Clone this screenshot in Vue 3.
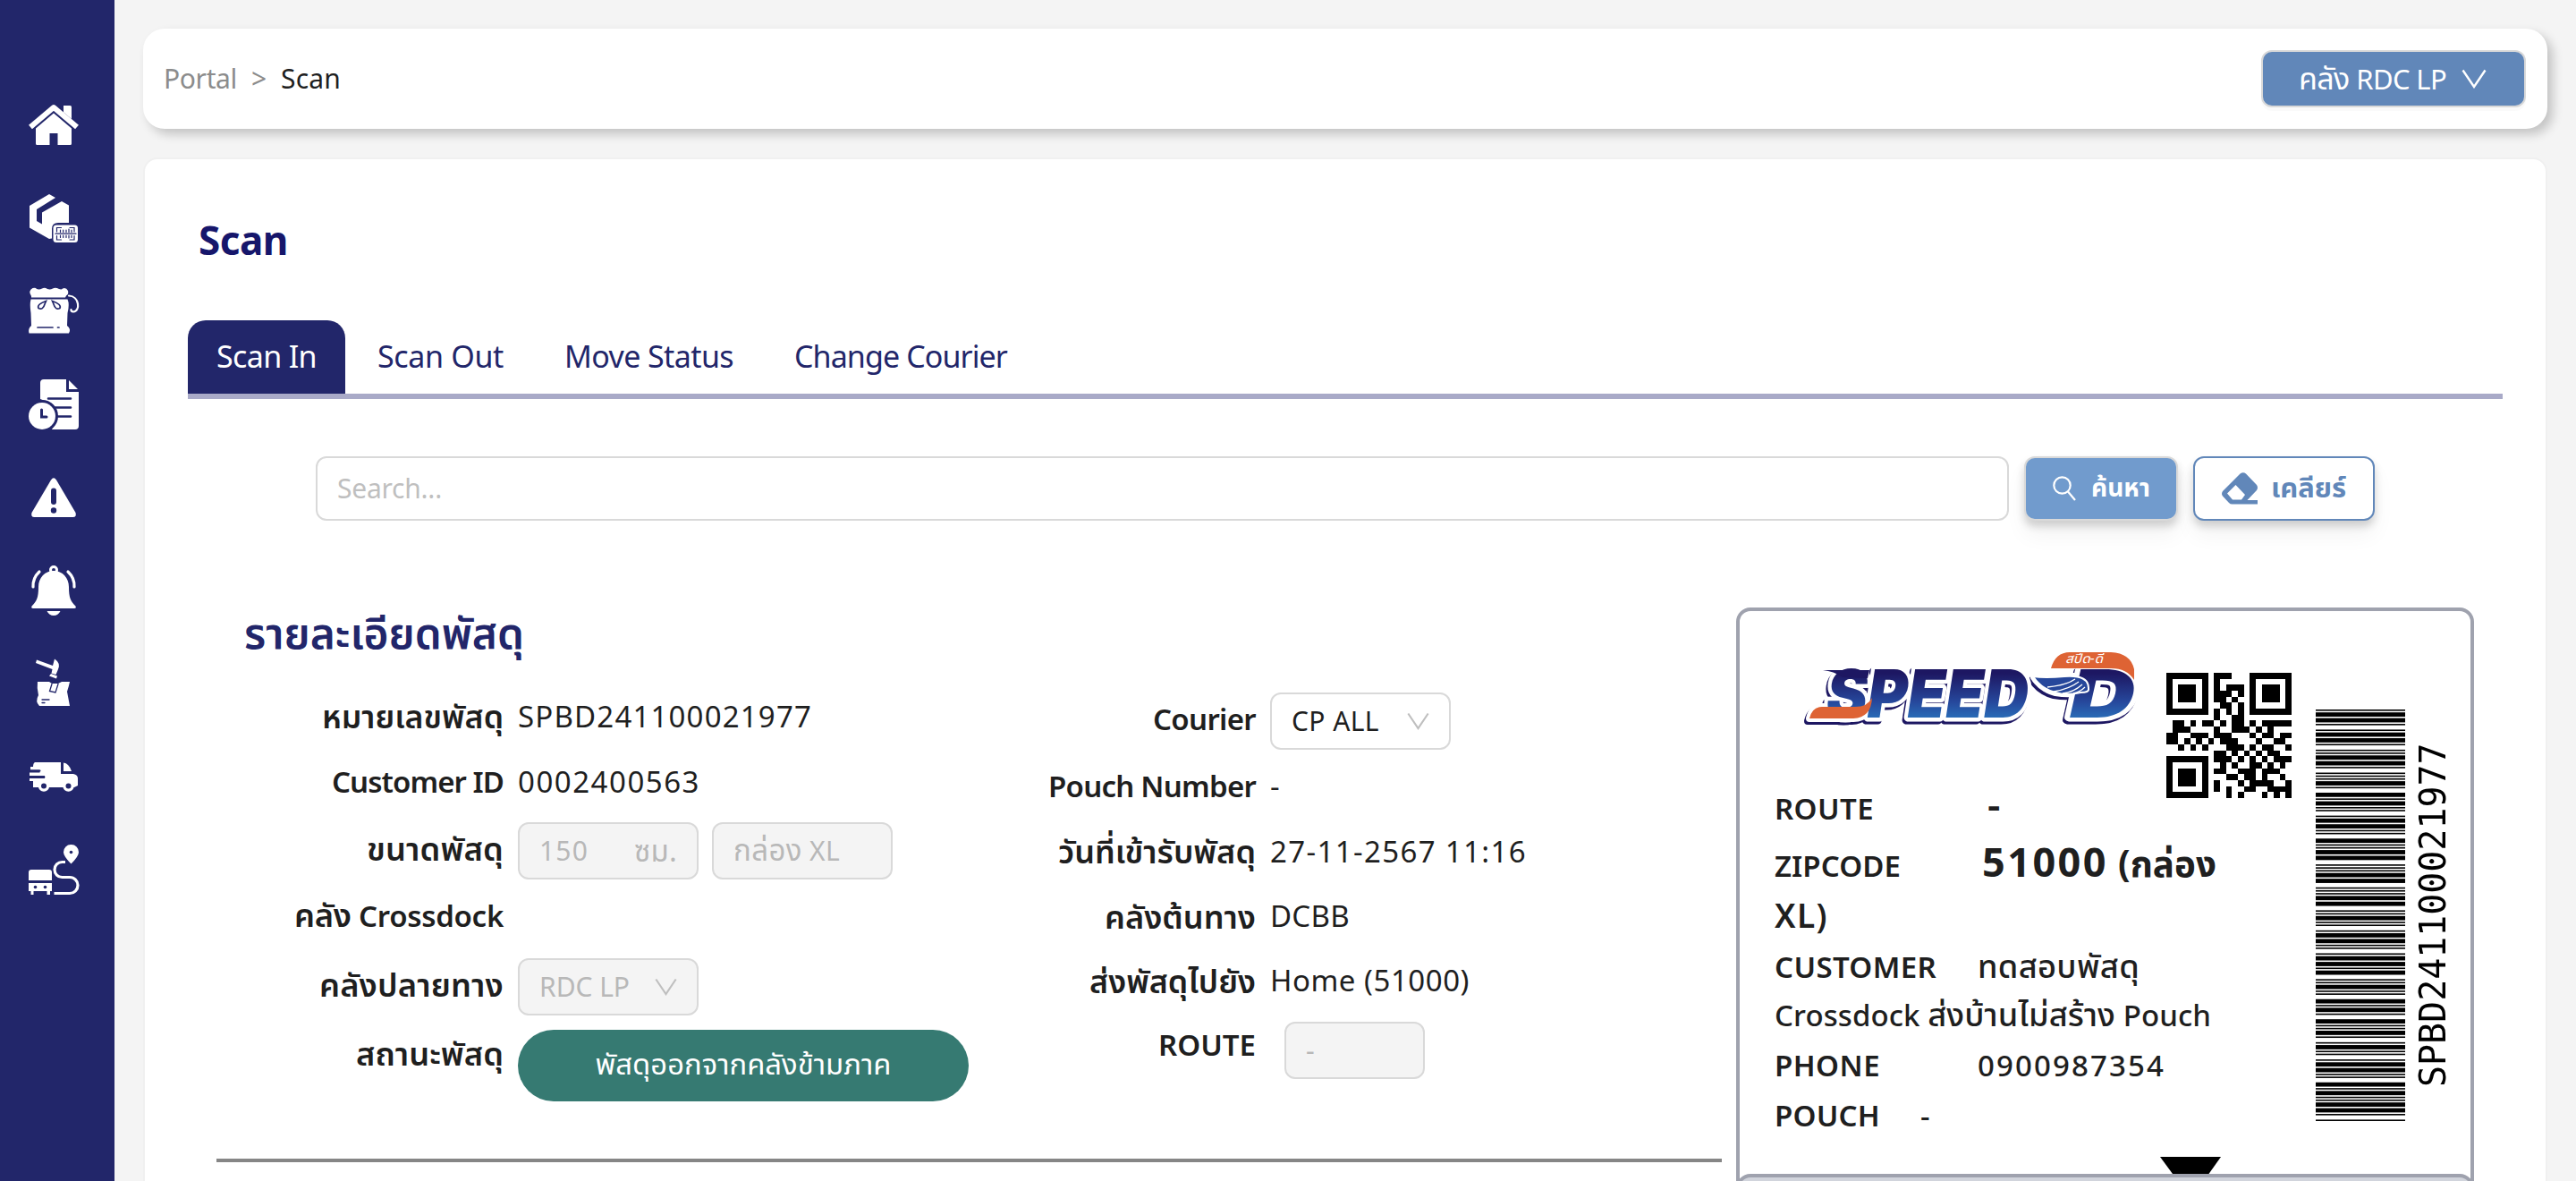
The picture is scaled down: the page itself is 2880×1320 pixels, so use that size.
<script setup>
// Makes the text of an element take the given width: Thai-only text is first
// enlarged a little, and the rest is spread over the letters.
const fitText = (el, { value }) => {
  if (!value) return
  const width = () => el.getBoundingClientRect().width
  el.style.letterSpacing = '0px'
  if (!/[A-Za-z0-9]/.test(el.textContent)) {
    const size = parseFloat(getComputedStyle(el).fontSize)
    const scale = Math.min(Math.max(value / width(), 0.94), 1.1)
    el.style.fontSize = `${(size * scale).toFixed(2)}px`
  }
  const base = width()
  el.style.letterSpacing = '1px'
  const step = width() - base
  el.style.letterSpacing = step ? `${((value - base) / step).toFixed(3)}px` : '0px'
}
const vFit = { mounted: fitText }

const parcelNo = 'SPBD241100021977'

const tabs = [
  { name: 'Scan In', w: 112, active: true },
  { name: 'Scan Out', w: 141 },
  { name: 'Move Status', w: 189 },
  { name: 'Change Courier', w: 238 },
]

/* ---------- Code 39 ---------- */
const CODE39 = {
  0: 'nnnwwnwnn', 1: 'wnnwnnnnw', 2: 'nnwwnnnnw', 4: 'nnnwwnnnw', 7: 'nnnwnnwnw',
  9: 'nnwwnnwnn', B: 'nnwnnwnnw', D: 'nnnnwwnnw', P: 'nnwnwnnwn', S: 'nnwnnnwwn', '*': 'nwnnwnwnn',
}
const bars = []
let barPos = 0
for (const ch of `*${parcelNo}*`) {
  ;[...CODE39[ch]].forEach((k, i) => {
    const size = k === 'w' ? 3 : 1
    if (i % 2 === 0) bars.push({ pos: barPos, size })
    barPos += size
  })
  barPos += 1
}
const barTotal = barPos - 1

/* ---------- QR, version 1, level Q, mask 0 ---------- */
function qrPath(text) {
  const N = 21
  const chars = '0123456789ABCDEFGHIJKLMNOPQRSTUVWXYZ $%*+-./:'
  let bits = '0010' + text.length.toString(2).padStart(9, '0')
  for (let i = 0; i < text.length; i += 2) {
    bits += i + 1 < text.length
      ? (chars.indexOf(text[i]) * 45 + chars.indexOf(text[i + 1])).toString(2).padStart(11, '0')
      : chars.indexOf(text[i]).toString(2).padStart(6, '0')
  }
  bits = bits.padEnd(104, '0').slice(0, 104)
  const data = bits.match(/.{8}/g).map((b) => parseInt(b, 2))
  const exp = []
  const log = []
  let x = 1
  for (let i = 0; i < 255; i++) {
    exp[i] = x
    log[x] = i
    x <<= 1
    if (x & 256) x ^= 0x11d
  }
  const mul = (a, b) => (a && b ? exp[(log[a] + log[b]) % 255] : 0)
  let gen = [1]
  for (let i = 0; i < 13; i++) {
    const next = new Array(gen.length + 1).fill(0)
    gen.forEach((g, j) => {
      next[j] ^= g
      next[j + 1] ^= mul(g, exp[i])
    })
    gen = next
  }
  const rem = [...data, ...new Array(13).fill(0)]
  for (let i = 0; i < 13; i++) {
    const f = rem[i]
    gen.forEach((g, j) => { rem[i + j] ^= mul(g, f) })
  }
  const stream = [...data, ...rem.slice(13)].map((v) => v.toString(2).padStart(8, '0')).join('')
  const m = Array.from({ length: N }, () => new Array(N).fill(null))
  const finder = (r0, c0) => {
    for (let r = -1; r < 8; r++) {
      for (let c = -1; c < 8; c++) {
        if (m[r0 + r] === undefined || m[r0 + r][c0 + c] === undefined) continue
        const d = Math.max(Math.abs(r - 3), Math.abs(c - 3))
        m[r0 + r][c0 + c] = d === 3 || d < 2 ? 1 : 0
      }
    }
  }
  finder(0, 0)
  finder(0, 14)
  finder(14, 0)
  for (let i = 8; i < 13; i++) m[6][i] = m[i][6] = i % 2 === 0 ? 1 : 0
  const fmt = [...'011010101011111'].map(Number)
  const first = [[8, 0], [8, 1], [8, 2], [8, 3], [8, 4], [8, 5], [8, 7], [8, 8], [7, 8], [5, 8], [4, 8], [3, 8], [2, 8], [1, 8], [0, 8]]
  fmt.forEach((b, i) => {
    m[first[i][0]][first[i][1]] = b
    if (i < 7) m[20 - i][8] = b
    else m[8][13 + i - 7] = b
  })
  m[13][8] = 1
  let k = 0
  let up = true
  for (let c = 20; c > 0; c -= 2) {
    if (c === 6) c = 5
    for (let i = 0; i < N; i++) {
      const r = up ? N - 1 - i : i
      for (const cc of [c, c - 1]) {
        if (m[r][cc] !== null) continue
        const bit = Number(stream[k++] || 0)
        m[r][cc] = (r + cc) % 2 === 0 ? bit ^ 1 : bit
      }
    }
    up = !up
  }
  let d = ''
  m.forEach((row, r) => row.forEach((v, c) => { if (v) d += `M${c} ${r}h1v1h-1z` }))
  return d
}
const qr = qrPath(parcelNo)
</script>

<template>
  <div class="page">
    <aside class="sidebar">
      <svg class="nav" viewBox="0 0 56 56">
        <path d="M39 6h7.500a1.500 1.500 0 0 1 1.500 1.500V21l-9-7.500z" />
        <path d="M2 30 28 8 54 30" fill="none" stroke="#fff" stroke-width="6" stroke-linejoin="round" />
        <path d="M28 14.500 48 31.500V48.500a1.500 1.500 0 0 1-1.500 1.500H32.500V37h-9V50H9.500A1.500 1.500 0 0 1 8 48.500V31.500z" />
      </svg>
      <svg class="nav" viewBox="0 0 56 56">
        <path d="M23 1 30 5 9 18V31L15 34.500V21.500L37 9 45 13.500V33H33q-7 0-7 7V50.500L23 51 1 38.500V14z" />
        <rect x="27.500" y="35.500" width="27.500" height="19.500" rx="3.500" />
        <path class="cut" d="M31.500 43v-4.500h5M46 38.500h5V43M31.500 47.500V52h5M46 52h5v-4.500M30 45.200h23M35.500 41v2.500M38.700 41v2.500M42 41v2.500M45 40v3.500M48 41v2.500M35.500 47v2.500M38.700 47v2.500M42 47v2.500M45 47v3M48 47v2.500" stroke-width="1.200" />
      </svg>
      <svg class="nav" viewBox="0 0 56 56">
        <path d="M3 11q-4-6 1.500-9Q8 1 9 3 12 4 15 2.500 18 1 21 3 24 4 27 2.500 30 1 34 3 37 4 38 2.500 42 1 44 5 45 9 42 10.500L41 12.500H3z" />
        <path d="M2.500 14.500H43.500Q46 20 43.500 30L43 44q5 4 2 8.500H0.500Q-1 47 3 44L2.500 30Q1 20 2.500 14.500z" />
        <path d="M45 10.500C57 11 58 28 50 28.500Q47 28 47.500 26" fill="none" stroke="#fff" stroke-width="2.200" stroke-linecap="round" />
        <path class="cut" d="M19.500 16.500Q9 20 11 24.500 16 27 18 20zM26.500 16.500Q37 20 35 24.500 30 27 28 20zM10 46h17M32.500 46h1.500" stroke-width="1.700" />
      </svg>
      <svg class="nav" viewBox="0 0 56 56">
        <path d="M17 0H42V14H56V52a4 4 0 0 1-4 4H26L32 41 26 27 13 22V4a4 4 0 0 1 4-4z" />
        <path d="M45 1 55 11H45z" />
        <path class="cut" d="M22 21.500H47M30 31.500H47M33 41.500H47" stroke-width="2.600" />
        <circle cx="15" cy="41" r="16.500" fill="none" stroke="#22266a" stroke-width="3" />
        <circle cx="15" cy="41" r="15" />
        <path class="cut" d="M14.500 34v8H20" stroke-width="3" />
      </svg>
      <svg class="nav" viewBox="0 0 56 56">
        <path d="M25 8.500Q28 4 31 8.500L52.500 45Q54 50 49.500 50H6.500Q2 50 3.500 45z" />
        <path class="cut" d="M28 20.500V33" stroke-width="6" />
        <circle cx="28" cy="42.500" r="3.200" fill="#22266a" />
      </svg>
      <svg class="nav" viewBox="0 0 56 56">
        <path d="M28 6C38 6 45 14 45 24 45 36 47 40 52.500 45.500Q53.500 48 51 48H5Q2.500 48 3.500 45.500C9 40 11 36 11 24 11 14 18 6 28 6zM20.500 51H35.500Q33 56 28 56T20.500 51z" />
        <circle cx="28" cy="5" r="3.500" fill="none" stroke="#fff" stroke-width="3" />
        <path d="M12 7Q4.500 14 5 24M44 7Q51.500 14 51 24" fill="none" stroke="#fff" stroke-width="3.200" stroke-linecap="round" />
      </svg>
      <svg class="nav" viewBox="0 0 56 56">
        <path d="M9 1.500 27 8 29 .5Q36 5 33 12L30.500 18 25.500 16.500 26.500 12 8 5zM25 17 32 19.500 31 22.500 23 19.500z" />
        <path d="M10 26H23L26 28H33L37 26H46Q45 31 43 37L46 53H12Q7 48 11 41 9 33 10 26z" />
        <path class="cut" d="M26 28.500 23.500 36.500 30 38 33 28.500M15 46H23M15 49.500H18" stroke-width="1.300" />
      </svg>
      <svg class="nav" viewBox="0 0 56 56">
        <path d="M7 12H36V25H50Q55 26 55 30V38L51 40H5V33H1V30H18V27H1V23.500H12.500V20.500H2V17H5Q5 13 7 12zM39 12.500Q45 13 48 22H39z" />
        <circle cx="17" cy="38.500" r="6.200" /><circle cx="44.500" cy="38.500" r="6.200" />
        <circle cx="17" cy="38.500" r="3" fill="#22266a" /><circle cx="44.500" cy="38.500" r="3" fill="#22266a" />
        <path class="cut" d="M2 21.500H12.500M2 28.500H17.500" stroke-width="2" />
      </svg>
      <svg class="nav" viewBox="0 0 56 56">
        <path d="M47.500 0A8.200 8.200 0 0 1 56 8.500Q56 13 47.500 21.500 39 13 39 8.500A8.200 8.200 0 0 1 47.500 0zM3 28H23Q26 28 26 31V40H0V31Q0 28 3 28zM0 43H26V52H24V56H20.500V52H5.500V56H2.500V52H0z" />
        <circle cx="47.500" cy="8.500" r="1.800" fill="#22266a" />
        <circle cx="7.500" cy="47.500" r="1.800" fill="#22266a" /><circle cx="18.500" cy="47.500" r="1.800" fill="#22266a" />
        <path d="M41 19.500H37.500A8.500 8.500 0 0 0 37.500 36.500H46A9 9 0 0 1 46 54.500H28.500" fill="none" stroke="#fff" stroke-width="3.200" />
      </svg>
    </aside>

    <div class="content">
      <header class="topbar">
        <nav class="crumbs">
          <span v-fit="82" class="muted">Portal</span>
          <span class="muted sep">&gt;</span>
          <span v-fit="67">Scan</span>
        </nav>
        <button class="warehouse">
          <span v-fit="165"><i>คลัง</i> RDC LP</span>
          <svg class="chev" viewBox="0 0 28 22"><path d="M1.500 1.500 14 20 26.500 1.500" /></svg>
        </button>
      </header>

      <main class="card">
        <h1><span v-fit="100">Scan</span></h1>
        <div class="tabs">
          <div v-for="t in tabs" :key="t.name" class="tab" :class="{ active: t.active }">
            <span v-fit="t.w">{{ t.name }}</span>
          </div>
        </div>

        <div class="search-row">
          <div class="search-box"><span v-fit="117">Search...</span></div>
          <button class="btn find">
            <svg viewBox="0 0 26 28"><circle cx="10.500" cy="10.500" r="9.200" /><path d="M17 17.500 25 27" /></svg>
            <span v-fit="66">ค้นหา</span>
          </button>
          <button class="btn clear">
            <svg viewBox="0 0 40 36">
              <path fill-rule="evenodd" d="M20.500 1.500Q24 -1 27 1.500L39 14Q41 17 39 20L28.500 31H40V35.500H11.500Q9.500 35.500 8 34L1 26.500Q-1 24 1 21zM15.500 14 6 23.500 12 30.500H22L26 25z" />
            </svg>
            <span v-fit="84">เคลียร์</span>
          </button>
        </div>

        <div class="detail">
          <section class="info">
            <h2><span v-fit="313">รายละเอียดพัสดุ</span></h2>
            <div class="cols">
              <div class="col left">
                <div class="row h73"><label><span v-fit="203">หมายเลขพัสดุ</span></label><span v-fit="329">{{ parcelNo }}</span></div>
                <div class="row h73"><label><span v-fit="192">Customer ID</span></label><span v-fit="204">0002400563</span></div>
                <div class="row h76">
                  <label><span v-fit="153">ขนาดพัสดุ</span></label>
                  <div class="field off w202"><span v-fit="55">150</span><span v-fit="48">ซม.</span></div>
                  <div class="field off w202 next"><span v-fit="119"><i>กล่อง</i> XL</span></div>
                </div>
                <div class="row h76"><label><span v-fit="234"><i>คลัง</i> Crossdock</span></label></div>
                <div class="row h77">
                  <label><span v-fit="206">คลังปลายทาง</span></label>
                  <div class="field off w202"><span v-fit="101">RDC LP</span><svg class="chev small" viewBox="0 0 28 22"><path d="M1.500 1.500 14 20 26.500 1.500" /></svg></div>
                </div>
                <div class="row h76"><label><span v-fit="165">สถานะพัสดุ</span></label><div class="pill"><span v-fit="331">พัสดุออกจากคลังข้ามภาค</span></div></div>
              </div>
              <div class="col right">
                <div class="row h79">
                  <label><span v-fit="115">Courier</span></label>
                  <div class="field w202"><span v-fit="98">CP ALL</span><svg class="chev small" viewBox="0 0 28 22"><path d="M1.500 1.500 14 20 26.500 1.500" /></svg></div>
                </div>
                <div class="row h72"><label><span v-fit="232">Pouch Number</span></label><span>-</span></div>
                <div class="row h73"><label><span v-fit="221">วันที่เข้ารับพัสดุ</span></label><span v-fit="287">27-11-2567 11:16</span></div>
                <div class="row h72"><label><span v-fit="169">คลังต้นทาง</span></label><span v-fit="89">DCBB</span></div>
                <div class="row h72"><label><span v-fit="186">ส่งพัสดุไปยัง</span></label><span v-fit="223">Home (51000)</span></div>
                <div class="row h72"><label><span v-fit="109">ROUTE</span></label><div class="field off route"><span>-</span></div></div>
              </div>
            </div>
            <div class="divider"></div>
          </section>

          <section class="ticket">
            <div class="ticket-body">
              <div class="ticket-main">
                <div class="ticket-top">
                  <svg class="logo" viewBox="0 0 390 100">
                    <defs>
                      <linearGradient id="blue" x1="0" y1="0" x2="0" y2="1">
                        <stop offset="0.250" stop-color="#1d1762" />
                        <stop offset="0.600" stop-color="#26479b" />
                        <stop offset="0.850" stop-color="#2a74bd" />
                      </linearGradient>
                    </defs>
                    <g class="raised">
                      <path class="halo" d="M13 83Q16 70 27 70H64Q78 70 83 60 82 82 62 83z" />
                      <path class="halo" d="M264 37Q276 38 298 36 326 34 325 50 310 58 288 54 272 50 264 37z" />
                      <text class="word" x="32" y="82" textLength="226" lengthAdjust="spacingAndGlyphs">SPEED</text>
                      <text class="word" x="304" y="82" textLength="73" lengthAdjust="spacingAndGlyphs">D</text>
                    </g>
                    <path d="M28 29H80L78 38 50 37Q40 30 28 29z" fill="#1d1762" />
                    <path d="M13 83Q16 70 27 70H64Q78 70 83 60 82 82 62 83z" fill="#de6334" />
                    <path d="M283 27Q288 9 304 9H350Q372 10 376 28V40Q368 27 350 27z" fill="#de6334" />
                    <path d="M263 36Q276 38 298 36 326 34 325 50 326 54 316 54 300 58 288 54 272 50 263 36z" fill="#26479b" stroke="#fff" stroke-width="2" />
                    <path d="M279 48Q300 46 310 39M286 53Q304 50 314 42M296 55Q308 54 318 45M308 55Q316 53 321 48" fill="none" stroke="#fff" stroke-width="1.300" />
                    <text class="logo-th" x="299" y="21" textLength="42" lengthAdjust="spacingAndGlyphs">สปีด-ดี</text>
                  </svg>
                  <svg class="qr" viewBox="0 0 21 21" shape-rendering="crispEdges"><path :d="qr" /></svg>
                </div>
                <div class="line first"><b v-fit="111" class="key">ROUTE</b><b class="val big dash">-</b></div>
                <div class="line"><b v-fit="141" class="key">ZIPCODE</b><b class="val zip"><span v-fit="141" class="big">51000</span><span v-fit="110" class="mid">(กล่อง</span></b></div>
                <div class="line"><b v-fit="60" class="mid">XL)</b></div>
                <div class="line"><b v-fit="181" class="key">CUSTOMER</b><span v-fit="181" class="val name">ทดสอบพัสดุ</span></div>
                <div class="line"><span v-fit="488">Crossdock <i>ส่งบ้านไม่สร้าง</i> Pouch</span></div>
                <div class="line"><b v-fit="118" class="key">PHONE</b><span v-fit="210" class="val phone">0900987354</span></div>
                <div class="line"><b v-fit="118" class="key">POUCH</b><span class="val pouch">-</span></div>
              </div>
              <svg class="barcode" :viewBox="`0 0 100 ${barTotal}`" preserveAspectRatio="none">
                <rect v-for="b in bars" :key="b.pos" x="0" width="100" :y="barTotal - b.pos - b.size" :height="b.size" />
              </svg>
              <div class="barcode-text">{{ parcelNo }}</div>
            </div>
            <svg class="arrow" viewBox="0 0 68 19"><path d="M0 0H68L54.500 19H14z" /></svg>
            <div class="ticket-next"></div>
          </section>
        </div>
      </main>
    </div>
  </div>
</template>

<style>
html, body { margin: 0; overflow: hidden; background: #f4f4f4; }
</style>

<style scoped>
* { box-sizing: border-box; }
.page { display: flex; width: 2880px; height: 1320px; overflow: hidden; font-family: "Noto Sans", "Noto Sans Thai", "Open Sans", sans-serif; font-size: 33px; color: #1f1f1f; background: #f4f4f4; }
.page span, .page b { display: inline-block; white-space: nowrap; flex: none; }
.page i { font-style: normal; font-size: 1.1em; line-height: 1; }
button { font-family: inherit; margin: 0; padding: 0; }
.sidebar { width: 128px; flex: none; background: #22266a; padding: 112px 0 0 32px; display: flex; flex-direction: column; gap: 48px; }
.nav { width: 56px; height: 56px; fill: #fff; flex: none; overflow: visible; }
.cut { fill: none; stroke: #22266a; stroke-linecap: round; }
.content { flex: 1; padding: 32px 32px 0; display: flex; flex-direction: column; gap: 32px; }
.topbar { height: 112px; flex: none; background: #fff; border-radius: 24px; box-shadow: 6px 6px 12px rgba(0, 0, 0, .2); display: flex; align-items: center; justify-content: space-between; padding: 0 24px 0 23px; }
.crumbs { display: flex; font-size: 30px; line-height: 60px; }
.muted { color: #8c8c8c; }
.sep { width: 49px; text-align: center; }
.warehouse { width: 296px; height: 64px; border: 2px solid #d9d9d9; border-radius: 12px; background: #6187b9; color: #fff; font-size: 31px; display: flex; align-items: center; padding-left: 40px; gap: 17px; box-shadow: 0 4px 0 rgba(0, 0, 0, .02); }
.chev { width: 28px; height: 22px; fill: none; stroke: currentColor; stroke-width: 2.400; flex: none; }
.chev.small { width: 25px; height: 20px; color: #bfbfbf; }
.card { flex: none; height: 1300px; border: 2px solid #f0f0f0; border-radius: 16px; background: #fff; }
h1 { margin: 60px 0 0 60px; height: 60px; line-height: 60px; font-size: 44px; font-weight: 700; color: #16166b; }
.tabs { margin: 60px 48px 0; height: 88px; display: flex; gap: 4px; border-bottom: 6px solid #a9aac8; color: #22266a; font-size: 34px; line-height: 80px; }
.tab { padding: 0 32px; border-radius: 20px 20px 0 0; }
.tab.active { background: #22266a; color: #fff; }
.search-row { margin: 64px 0 0 191px; display: flex; height: 72px; }
.search-box { width: 1893px; border: 2px solid #d9d9d9; border-radius: 12px; padding-left: 22px; line-height: 68px; font-size: 30px; color: #bfbfbf; }
.btn { border-radius: 12px; display: flex; align-items: center; font-weight: 700; box-shadow: 0 16px 24px rgba(0, 0, 0, .05), 0 6px 10px rgba(0, 0, 0, .16); }
.find { margin-left: 17px; width: 172px; border: 2px solid #d9d9d9; background: #719bcd; color: #fff; font-size: 28px; padding-left: 30px; gap: 17px; }
.find svg { width: 26px; height: 28px; fill: none; stroke: #fff; stroke-width: 2.200; }
.clear { margin-left: 17px; width: 203px; border: 2px solid #6187b9; background: #fff; color: #6187b9; font-size: 31px; padding-left: 30px; gap: 15px; }
.clear svg { width: 40px; height: 36px; fill: #6187b9; }
.detail { margin-top: 97px; display: flex; }
.info { margin-left: 80px; width: 1683px; }
h2 { margin: 0 0 29px 31px; height: 56px; line-height: 56px; font-size: 44px; font-weight: 600; color: #22266a; }
.cols { display: flex; height: 451px; }
.left { width: 842px; }
.row { display: flex; align-items: flex-start; }
.row label { text-align: right; margin-right: 17px; font-weight: 600; }
.left label { width: 321px; }
.left label + * { margin-left: -1px; }
.right label { width: 320px; }
.right label + * { margin-left: -1px; }
.h72 { height: 72px; line-height: 72px; }
.h73 { height: 73px; line-height: 73px; }
.h76 { height: 76px; line-height: 76px; }
.h77 { height: 77px; line-height: 77px; }
.h79 { height: 79px; line-height: 79px; }
.field { margin-top: 9px; height: 64px; border: 2px solid #d9d9d9; border-radius: 12px; display: flex; align-items: center; justify-content: space-between; padding: 0 22px; font-size: 30px; line-height: 60px; }
.right .field { margin-top: 10px; }
.off { background: #f4f4f4; color: #b8b8b8; }
.w202 { width: 202px; }
.next { margin-left: 15px; }
.right .route { margin-left: 15px; width: 157px; }
.pill { margin-top: 12px; width: 504px; height: 80px; border-radius: 40px; background: #367a72; color: #fff; text-align: center; line-height: 76px; font-size: 30px; }
.divider { margin-top: 80px; height: 4px; background: #868686; }
.ticket { margin-left: 16px; width: 825px; height: 700px; border: 4px solid #9fa2ae; border-radius: 16px; }
.ticket-body { display: flex; height: 610px; }
.ticket-main { width: 644px; padding-left: 39px; font-weight: 500; }
.ticket-top { height: 193px; display: flex; margin-left: 26px; }
.logo { margin-top: 37px; width: 390px; height: 100px; overflow: visible; font-family: Inter, Roboto, sans-serif; font-weight: 900; font-style: italic; font-size: 74px; flex: none; }
.raised { filter: drop-shadow(-2px 3px 0 #1d1762); }
.halo { fill: #fff; stroke: #fff; stroke-width: 8; stroke-linejoin: round; }
.word { fill: url(#blue); stroke: #fff; stroke-width: 9; stroke-linejoin: round; paint-order: stroke; }
.logo-th { font-family: "Noto Sans", "Noto Sans Thai", sans-serif; font-weight: 400; font-size: 14px; fill: #fff; }
.qr { margin: 69px 0 0 22px; width: 140px; height: 140px; flex: none; }
.line { display: flex; align-items: baseline; line-height: 56px; height: 56px; }
.first { height: 59px; }
.zip, .line:nth-child(3) { height: 60px; }
.page b { font-weight: 600; }
.big { font-size: 45px; }
.page b.val.zip { display: flex; align-items: baseline; margin-left: 91px; gap: 11px; font-weight: 700; }
.mid { font-size: 37px; }
.dash { margin-left: 127px; line-height: 46px; }
.name { margin-left: 46px; }
.phone { margin-left: 109px; }
.pouch { margin-left: 45px; }
.barcode { margin-top: 110px; width: 100px; height: 460px; flex: none; }
.barcode-text { writing-mode: vertical-rl; transform: rotate(180deg); font-family: "DejaVu Sans Mono", monospace; font-size: 40px; line-height: 48px; color: #000; height: 387px; margin: 145px 0 0 7px; letter-spacing: -.05px; white-space: nowrap; }
.arrow { display: block; width: 68px; height: 19px; margin-left: 470px; }
.ticket-next { margin: 0 -4px; height: 100px; border: 4px solid #9fa2ae; border-radius: 16px; background: #d1d4dc; }
</style>
